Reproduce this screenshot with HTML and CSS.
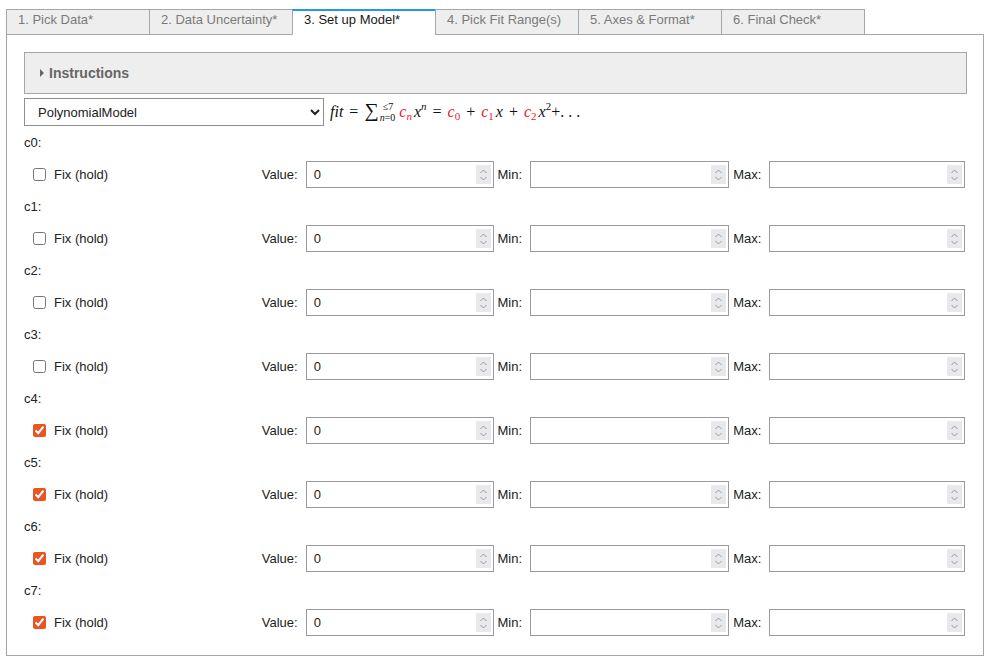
FILE: index.html
```html
<!DOCTYPE html>
<html>
<head>
<meta charset="utf-8">
<link rel="stylesheet" href="styles.css">
</head>
<body>
<div class="wrap">
  <div class="tabs">
    <div class="tab">1. Pick Data*</div>
    <div class="tab">2. Data Uncertainty*</div>
    <div class="tab active">3. Set up Model*</div>
    <div class="tab">4. Pick Fit Range(s)</div>
    <div class="tab">5. Axes &amp; Format*</div>
    <div class="tab">6. Final Check*</div>
  </div>
  <div class="panel">
    <div class="instructions"><span class="tri"></span>Instructions</div>
    <div class="model-line">
      <select class="model-select"><option>PolynomialModel</option></select>
      <span class="formula"><i>fit</i><span class="op">=</span><span class="sum">∑</span><span class="lim"><span class="up">≤7</span><span class="dn"><i>n</i>=0</span></span><span class="red"><i>c</i><sub><i>n</i></sub></span><i class="x">x</i><sup><i>n</i></sup><span class="op">=</span><span class="red"><i>c</i><sub>0</sub></span><span class="op">+</span><span class="red"><i>c</i><sub>1</sub></span><i class="x">x</i><span class="op">+</span><span class="red"><i>c</i><sub>2</sub></span><i class="x">x</i><sup>2</sup>+. . .</span>
    </div>

    <div class="coefs">
      <div class="coef">
        <div class="coef-name">c0:</div>
        <div class="row">
          <label class="fix"><input type="checkbox"><span>Fix (hold)</span></label>
          <div class="field"><span>Value:</span><div class="box"><input type="text" value="0"><span class="spin"><svg width="9" height="14" viewBox="0 0 9 14"><path d="M1.5 5 L4.5 2 L7.5 5 M1.5 9 L4.5 12 L7.5 9" fill="none" stroke="#9a9a9a" stroke-width="1"/></svg></span></div></div>
          <div class="field"><span>Min:</span><div class="box"><input type="text" value=""><span class="spin"><svg width="9" height="14" viewBox="0 0 9 14"><path d="M1.5 5 L4.5 2 L7.5 5 M1.5 9 L4.5 12 L7.5 9" fill="none" stroke="#9a9a9a" stroke-width="1"/></svg></span></div></div>
          <div class="field"><span>Max:</span><div class="box"><input type="text" value=""><span class="spin"><svg width="9" height="14" viewBox="0 0 9 14"><path d="M1.5 5 L4.5 2 L7.5 5 M1.5 9 L4.5 12 L7.5 9" fill="none" stroke="#9a9a9a" stroke-width="1"/></svg></span></div></div>
        </div>
      </div>
      <div class="coef">
        <div class="coef-name">c1:</div>
        <div class="row">
          <label class="fix"><input type="checkbox"><span>Fix (hold)</span></label>
          <div class="field"><span>Value:</span><div class="box"><input type="text" value="0"><span class="spin"><svg width="9" height="14" viewBox="0 0 9 14"><path d="M1.5 5 L4.5 2 L7.5 5 M1.5 9 L4.5 12 L7.5 9" fill="none" stroke="#9a9a9a" stroke-width="1"/></svg></span></div></div>
          <div class="field"><span>Min:</span><div class="box"><input type="text" value=""><span class="spin"><svg width="9" height="14" viewBox="0 0 9 14"><path d="M1.5 5 L4.5 2 L7.5 5 M1.5 9 L4.5 12 L7.5 9" fill="none" stroke="#9a9a9a" stroke-width="1"/></svg></span></div></div>
          <div class="field"><span>Max:</span><div class="box"><input type="text" value=""><span class="spin"><svg width="9" height="14" viewBox="0 0 9 14"><path d="M1.5 5 L4.5 2 L7.5 5 M1.5 9 L4.5 12 L7.5 9" fill="none" stroke="#9a9a9a" stroke-width="1"/></svg></span></div></div>
        </div>
      </div>
      <div class="coef">
        <div class="coef-name">c2:</div>
        <div class="row">
          <label class="fix"><input type="checkbox"><span>Fix (hold)</span></label>
          <div class="field"><span>Value:</span><div class="box"><input type="text" value="0"><span class="spin"><svg width="9" height="14" viewBox="0 0 9 14"><path d="M1.5 5 L4.5 2 L7.5 5 M1.5 9 L4.5 12 L7.5 9" fill="none" stroke="#9a9a9a" stroke-width="1"/></svg></span></div></div>
          <div class="field"><span>Min:</span><div class="box"><input type="text" value=""><span class="spin"><svg width="9" height="14" viewBox="0 0 9 14"><path d="M1.5 5 L4.5 2 L7.5 5 M1.5 9 L4.5 12 L7.5 9" fill="none" stroke="#9a9a9a" stroke-width="1"/></svg></span></div></div>
          <div class="field"><span>Max:</span><div class="box"><input type="text" value=""><span class="spin"><svg width="9" height="14" viewBox="0 0 9 14"><path d="M1.5 5 L4.5 2 L7.5 5 M1.5 9 L4.5 12 L7.5 9" fill="none" stroke="#9a9a9a" stroke-width="1"/></svg></span></div></div>
        </div>
      </div>
      <div class="coef">
        <div class="coef-name">c3:</div>
        <div class="row">
          <label class="fix"><input type="checkbox"><span>Fix (hold)</span></label>
          <div class="field"><span>Value:</span><div class="box"><input type="text" value="0"><span class="spin"><svg width="9" height="14" viewBox="0 0 9 14"><path d="M1.5 5 L4.5 2 L7.5 5 M1.5 9 L4.5 12 L7.5 9" fill="none" stroke="#9a9a9a" stroke-width="1"/></svg></span></div></div>
          <div class="field"><span>Min:</span><div class="box"><input type="text" value=""><span class="spin"><svg width="9" height="14" viewBox="0 0 9 14"><path d="M1.5 5 L4.5 2 L7.5 5 M1.5 9 L4.5 12 L7.5 9" fill="none" stroke="#9a9a9a" stroke-width="1"/></svg></span></div></div>
          <div class="field"><span>Max:</span><div class="box"><input type="text" value=""><span class="spin"><svg width="9" height="14" viewBox="0 0 9 14"><path d="M1.5 5 L4.5 2 L7.5 5 M1.5 9 L4.5 12 L7.5 9" fill="none" stroke="#9a9a9a" stroke-width="1"/></svg></span></div></div>
        </div>
      </div>
      <div class="coef">
        <div class="coef-name">c4:</div>
        <div class="row">
          <label class="fix"><input type="checkbox" checked><span>Fix (hold)</span></label>
          <div class="field"><span>Value:</span><div class="box"><input type="text" value="0"><span class="spin"><svg width="9" height="14" viewBox="0 0 9 14"><path d="M1.5 5 L4.5 2 L7.5 5 M1.5 9 L4.5 12 L7.5 9" fill="none" stroke="#9a9a9a" stroke-width="1"/></svg></span></div></div>
          <div class="field"><span>Min:</span><div class="box"><input type="text" value=""><span class="spin"><svg width="9" height="14" viewBox="0 0 9 14"><path d="M1.5 5 L4.5 2 L7.5 5 M1.5 9 L4.5 12 L7.5 9" fill="none" stroke="#9a9a9a" stroke-width="1"/></svg></span></div></div>
          <div class="field"><span>Max:</span><div class="box"><input type="text" value=""><span class="spin"><svg width="9" height="14" viewBox="0 0 9 14"><path d="M1.5 5 L4.5 2 L7.5 5 M1.5 9 L4.5 12 L7.5 9" fill="none" stroke="#9a9a9a" stroke-width="1"/></svg></span></div></div>
        </div>
      </div>
      <div class="coef">
        <div class="coef-name">c5:</div>
        <div class="row">
          <label class="fix"><input type="checkbox" checked><span>Fix (hold)</span></label>
          <div class="field"><span>Value:</span><div class="box"><input type="text" value="0"><span class="spin"><svg width="9" height="14" viewBox="0 0 9 14"><path d="M1.5 5 L4.5 2 L7.5 5 M1.5 9 L4.5 12 L7.5 9" fill="none" stroke="#9a9a9a" stroke-width="1"/></svg></span></div></div>
          <div class="field"><span>Min:</span><div class="box"><input type="text" value=""><span class="spin"><svg width="9" height="14" viewBox="0 0 9 14"><path d="M1.5 5 L4.5 2 L7.5 5 M1.5 9 L4.5 12 L7.5 9" fill="none" stroke="#9a9a9a" stroke-width="1"/></svg></span></div></div>
          <div class="field"><span>Max:</span><div class="box"><input type="text" value=""><span class="spin"><svg width="9" height="14" viewBox="0 0 9 14"><path d="M1.5 5 L4.5 2 L7.5 5 M1.5 9 L4.5 12 L7.5 9" fill="none" stroke="#9a9a9a" stroke-width="1"/></svg></span></div></div>
        </div>
      </div>
      <div class="coef">
        <div class="coef-name">c6:</div>
        <div class="row">
          <label class="fix"><input type="checkbox" checked><span>Fix (hold)</span></label>
          <div class="field"><span>Value:</span><div class="box"><input type="text" value="0"><span class="spin"><svg width="9" height="14" viewBox="0 0 9 14"><path d="M1.5 5 L4.5 2 L7.5 5 M1.5 9 L4.5 12 L7.5 9" fill="none" stroke="#9a9a9a" stroke-width="1"/></svg></span></div></div>
          <div class="field"><span>Min:</span><div class="box"><input type="text" value=""><span class="spin"><svg width="9" height="14" viewBox="0 0 9 14"><path d="M1.5 5 L4.5 2 L7.5 5 M1.5 9 L4.5 12 L7.5 9" fill="none" stroke="#9a9a9a" stroke-width="1"/></svg></span></div></div>
          <div class="field"><span>Max:</span><div class="box"><input type="text" value=""><span class="spin"><svg width="9" height="14" viewBox="0 0 9 14"><path d="M1.5 5 L4.5 2 L7.5 5 M1.5 9 L4.5 12 L7.5 9" fill="none" stroke="#9a9a9a" stroke-width="1"/></svg></span></div></div>
        </div>
      </div>
      <div class="coef">
        <div class="coef-name">c7:</div>
        <div class="row">
          <label class="fix"><input type="checkbox" checked><span>Fix (hold)</span></label>
          <div class="field"><span>Value:</span><div class="box"><input type="text" value="0"><span class="spin"><svg width="9" height="14" viewBox="0 0 9 14"><path d="M1.5 5 L4.5 2 L7.5 5 M1.5 9 L4.5 12 L7.5 9" fill="none" stroke="#9a9a9a" stroke-width="1"/></svg></span></div></div>
          <div class="field"><span>Min:</span><div class="box"><input type="text" value=""><span class="spin"><svg width="9" height="14" viewBox="0 0 9 14"><path d="M1.5 5 L4.5 2 L7.5 5 M1.5 9 L4.5 12 L7.5 9" fill="none" stroke="#9a9a9a" stroke-width="1"/></svg></span></div></div>
          <div class="field"><span>Max:</span><div class="box"><input type="text" value=""><span class="spin"><svg width="9" height="14" viewBox="0 0 9 14"><path d="M1.5 5 L4.5 2 L7.5 5 M1.5 9 L4.5 12 L7.5 9" fill="none" stroke="#9a9a9a" stroke-width="1"/></svg></span></div></div>
        </div>
      </div>
    </div>
  </div>
</div>
</body>
</html>
```

FILE: styles.css
```css
* { box-sizing: border-box; }
html, body { margin: 0; padding: 0; background: #fff; }
body {
  font-family: "Liberation Sans", Arial, sans-serif;
  font-size: 13px;
  color: #222;
}
.wrap {
  margin: 9px 0 0 6px;
  width: 978px;
}
.tabs {
  display: flex;
  position: relative;
  z-index: 1;
  margin-bottom: -1px;
}
.tab {
  width: 144px;
  height: 26px;
  margin-left: -1px;
  padding: 2px 12px 0 11px;
  line-height: 16px;
  border: 1px solid #a6a6a6;
  background: #eeeeee;
  color: #7a7a7a;
  white-space: nowrap;
}
.tab:first-child { margin-left: 0; }
.tab.active {
  background: #fff;
  color: #1a1a1a;
  border-top: 2px solid #2196f3;
  border-bottom-color: #fff;
  padding-top: 1px;
}
.panel {
  border: 1px solid #a6a6a6;
  padding: 17px 16px 19px 17px;
}
.instructions {
  height: 42px;
  border: 1px solid #a6a6a6;
  background: #eeeeee;
  display: flex;
  align-items: center;
  padding-left: 15px;
  font-weight: bold;
  font-size: 14px;
  color: #666;
}
.tri {
  width: 0;
  height: 0;
  border-top: 4px solid transparent;
  border-bottom: 4px solid transparent;
  border-left: 4px solid #666;
  margin-right: 5px;
}
.model-line {
  display: flex;
  align-items: center;
  margin-top: 4px;
  height: 28px;
}
.model-select {
  width: 300px;
  height: 28px;
  border: 1px solid #8f8f8f;
  border-radius: 0;
  background: #fff;
  font-family: "Liberation Sans", Arial, sans-serif;
  font-size: 13px;
  color: #222;
  padding: 0 0 0 9px;
  flex: none;
}
.formula {
  display: block;
  margin-left: 6px;
  font-family: "Liberation Serif", "DejaVu Serif", serif;
  font-size: 16px;
  line-height: 20px;
  color: #111;
  white-space: nowrap;
  position: relative;
  top: -1px;
}
.formula i { font-style: italic; }
.formula .op { margin: 0 6px; }
.formula .sum { font-size: 20px; }
.formula .lim {
  display: inline-block;
  vertical-align: -4px;
  font-size: 10px;
  line-height: 11px;
  margin-left: 2px;
  margin-right: 4px;
}
.formula .lim .up, .formula .lim .dn { display: block; }
.formula .lim .up { padding-left: 2px; }
.formula .lim .dn { margin-left: -1px; }
.formula sub, .formula sup { font-size: 11px; line-height: 0; }
.formula sub { vertical-align: -3px; }
.formula sup { vertical-align: 7px; }
.formula .x { margin-left: 2px; }
.formula .red { color: #e8202a; }
.coefs {
  display: flex;
  flex-direction: column;
  gap: 11px;
  margin-top: 9px;
}
.coef-name {
  line-height: 16px;
  height: 16px;
  margin-bottom: 10px;
}
.row {
  display: grid;
  grid-template-columns: repeat(4, minmax(0, 1fr));
  height: 27px;
  align-items: center;
}
.fix {
  display: flex;
  align-items: center;
  padding-left: 9px;
  gap: 8px;
}
.fix input {
  margin: 0;
  width: 13px;
  height: 13px;
  accent-color: #e95420;
}
.field {
  display: flex;
  align-items: center;
  gap: 8px;
  padding: 0 2px 0 2px;
  height: 27px;
}
.box {
  flex: 1;
  min-width: 0;
  height: 27px;
  border: 1px solid #9a9a9a;
  display: flex;
  align-items: center;
  background: #fff;
}
.box input {
  flex: 1;
  min-width: 0;
  width: 10px;
  border: none;
  outline: none;
  font-family: "Liberation Sans", Arial, sans-serif;
  font-size: 13px;
  color: #222;
  padding: 0 0 0 7px;
  height: 23px;
  background: transparent;
}
.spin {
  flex: none;
  width: 15px;
  height: 19px;
  margin-right: 2px;
  background: #e9e9ed;
  display: flex;
  align-items: center;
  justify-content: center;
}
```
